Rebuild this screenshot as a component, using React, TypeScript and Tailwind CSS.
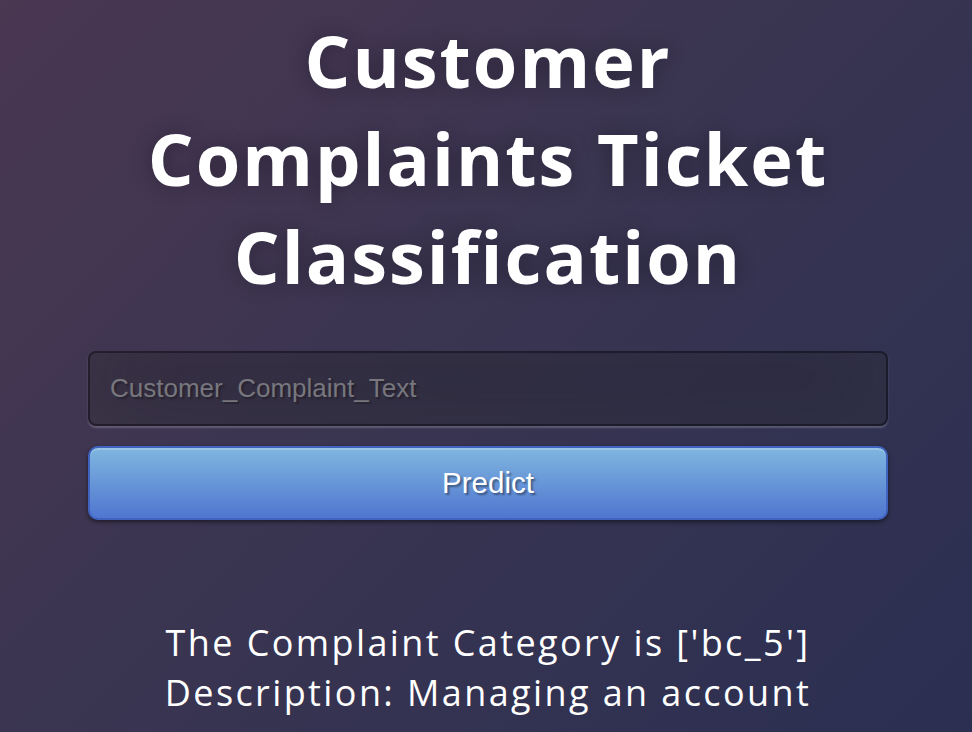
import React from 'react';

export default function App() {
  return (
    <main className="min-h-screen w-full overflow-hidden bg-[linear-gradient(135deg,#4a3752_0%,#3a3551_45%,#2b2f52_100%)] font-['Open_Sans',sans-serif]">
      <div className="ml-[88px] w-[800px] pt-[11px]">
        {/* Title */}
        <h1 className="text-center text-[72px] font-bold leading-[98px] tracking-[2px] text-white [text-shadow:0_0_20px_rgba(0,0,0,0.3)]">
          Customer
          <br />
          Complaints Ticket
          <br />
          Classification
        </h1>

        {/* Form */}
        <form className="mt-[46px]" onSubmit={(e) => e.preventDefault()}>
          <input
            type="text"
            name="complaint"
            placeholder="Customer_Complaint_Text"
            className="mb-[20px] block h-[75px] w-full rounded-[8px] border-2 border-[rgba(0,0,0,0.3)] bg-[rgba(0,0,0,0.22)] px-[20px] font-['Liberation_Sans',Arial,sans-serif] text-[26px] text-white outline-none [text-shadow:2px_2px_2px_rgba(0,0,0,0.3)] shadow-[inset_0_-10px_90px_rgba(100,100,100,0.2),0_2px_2px_rgba(255,255,255,0.2)] placeholder:text-[#77777d]"
          />
          <button
            type="submit"
            className="block h-[74px] w-full rounded-[10px] border-2 border-[#3f63bf] bg-[linear-gradient(to_bottom,#7fb6df,#5076d0)] font-['Liberation_Sans',Arial,sans-serif] text-[29.5px] text-white [text-shadow:2px_2px_2px_rgba(0,0,0,0.4)] shadow-[inset_0_2px_0_rgba(255,255,255,0.2),0_2px_4px_rgba(0,0,0,0.5)]"
          >
            Predict
          </button>
        </form>

        {/* Result */}
        <div className="mt-[98px] text-center text-[36px] leading-[50px] tracking-[2.4px] text-white">
          The Complaint Category is ['bc_5']
          <br />
          Description: Managing an account
        </div>
      </div>
    </main>
  );
}
